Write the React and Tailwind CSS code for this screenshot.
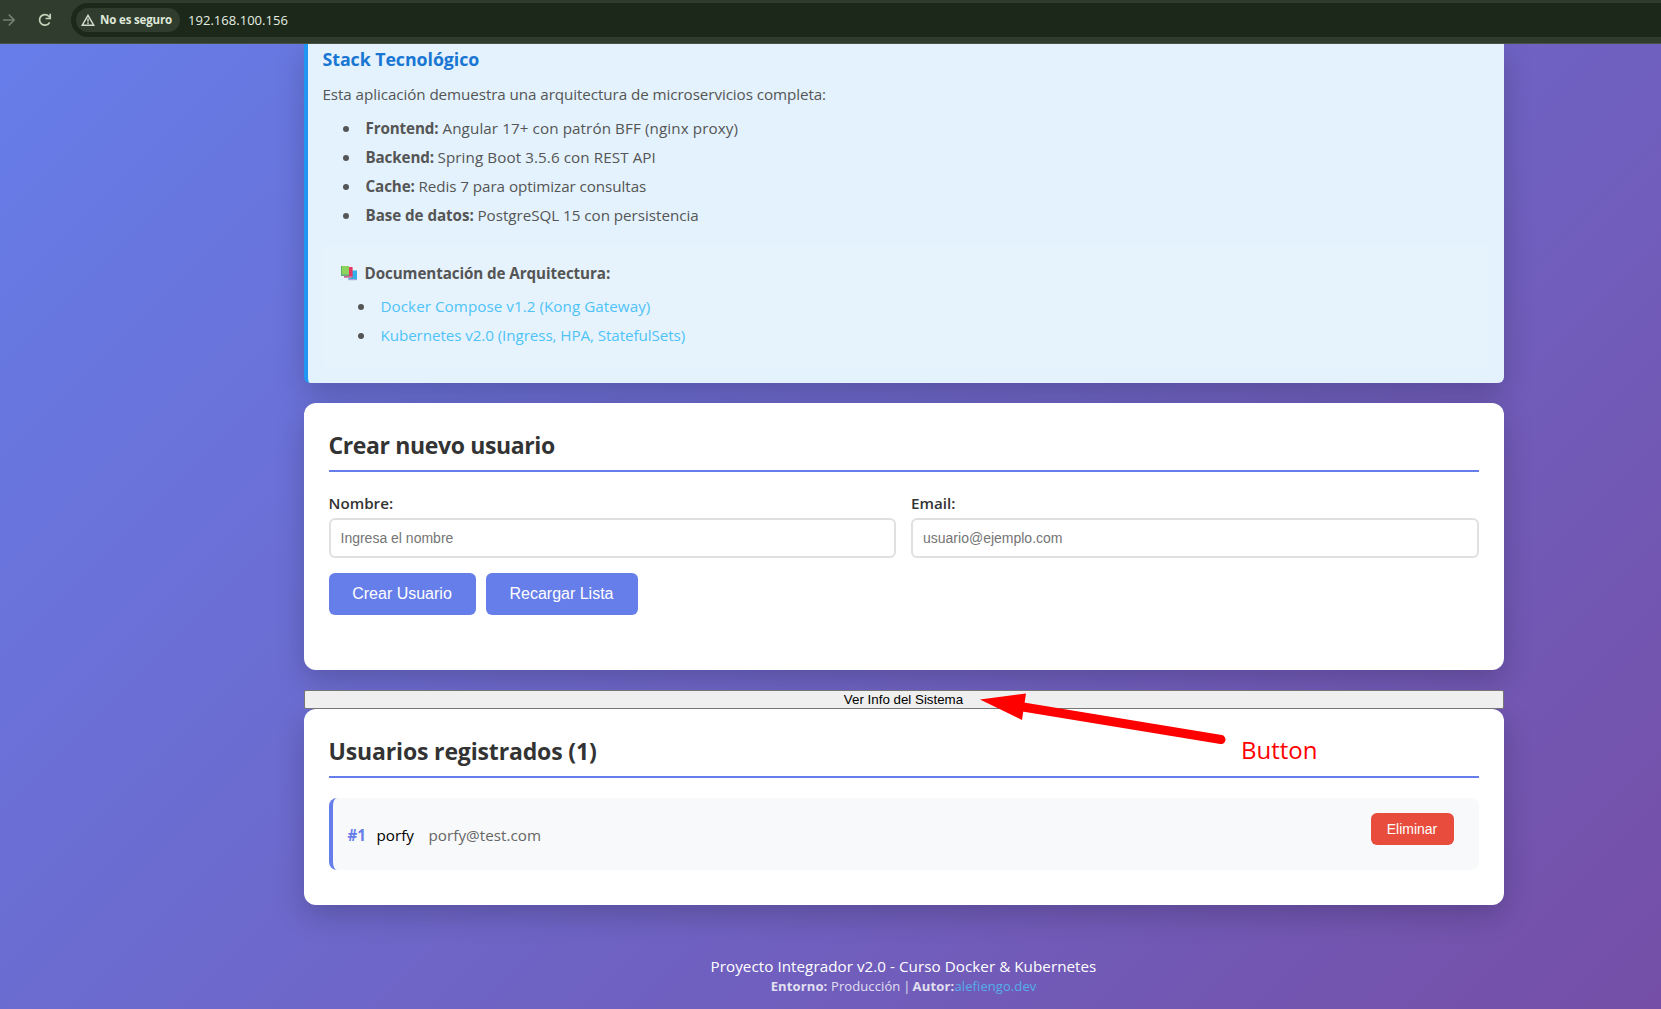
import React from "react";

function BrowserBar() {
  return (
    <header className="flex h-[44px] items-start border-b border-[#465143] bg-[#303d2e] pt-[3px]">
      <div className="flex h-[34px] w-[71px] shrink-0 items-center">
        <svg width="16" height="14" viewBox="0 0 16 14" fill="none" stroke="#74806f" strokeWidth="1.6">
          <path d="M3 7h11M8.8 1.6 14.2 7l-5.4 5.4" />
        </svg>
        <svg className="ml-[22px]" width="14" height="14" viewBox="0 0 14 14" fill="none" stroke="#c3d3bc" strokeWidth="1.7">
          <path d="M11.6 9.3A5.3 5.3 0 1 1 10.8 3.3L12 4.6" />
          <path d="M12.2 .8v4.7H7.6" />
        </svg>
      </div>
      <div className="flex h-[34px] flex-1 items-center rounded-l-[17px] bg-[#1c291a] pl-[5px]">
        <div className="flex h-6 w-[104px] items-center rounded-full bg-[#303d2e] pl-[5px] text-[11.5px] font-bold tracking-[-0.15px] text-[#dfe8da]">
          <svg className="mr-[5px]" width="14" height="12" viewBox="0 0 14 12" fill="none" stroke="#d3ddce" strokeWidth="1.4">
            <path d="M7 1.3 12.8 11.3H1.2Z" />
            <path d="M7 4.4v3.4M7 8.6v1.4" />
          </svg>
          <span className="whitespace-nowrap">No es seguro</span>
        </div>
        <span className="ml-2 pt-px text-[13px] tracking-[0.03px] text-[#e6ede2]">192.168.100.156</span>
      </div>
    </header>
  );
}

const stack = [
  { label: "Frontend:", text: "Angular 17+ con patrón BFF (nginx proxy)", l: "w-[77px] tracking-[-0.13px]", t: "tracking-[0.1px]" },
  { label: "Backend:", text: "Spring Boot 3.5.6 con REST API", l: "w-[72px] tracking-[-0.13px]", t: "tracking-[0.09px]" },
  { label: "Cache:", text: "Redis 7 para optimizar consultas", l: "w-[53px] tracking-[-0.1px]", t: "tracking-[-0.06px]" },
  { label: "Base de datos:", text: "PostgreSQL 15 con persistencia", l: "w-[112px] tracking-[-0.06px]", t: "tracking-[-0.03px]" },
];

const docs = [
  { text: "Docker Compose v1.2 (Kong Gateway)", t: "tracking-[0.055px]" },
  { text: "Kubernetes v2.0 (Ingress, HPA, StatefulSets)", t: "tracking-[-0.08px]" },
];

function Bullet() {
  return <span className="mr-[17px] size-[6px] shrink-0 rounded-full bg-[#555]" />;
}

function Books() {
  return (
    <svg className="mr-[8px] shrink-0" width="16" height="15" viewBox="0 0 16 15">
      <path d="M10 4.5h6V14H7.5v-2H10z" fill="#35aeea" />
      <path d="M7.5 13h8.2v1.2H7.5z" fill="#a9a6d8" />
      <path d="M7 1h4.6v10.4H3V9.5h4z" fill="#e23a62" />
      <path d="M3 10.4h8v1.4H3z" fill="#c486ad" />
      <path d="M0 0h8v8.8H0z" fill="#8fd35f" />
      <path d="M0 8.4h8v1.6H0z" fill="#63aa78" />
      <path d="M0 0h1v10H0z" fill="#58b55b" />
    </svg>
  );
}

function StackCard() {
  return (
    <section className="h-[339px] rounded-b-md border-l-4 border-[#2196f3] bg-[#e3f2fd] pl-[15px] pr-[15px] text-[15.2px] text-[#555] shadow-[0_10px_30px_rgba(0,0,0,0.2)]">
      <h3 className="pt-[3px] text-[17.8px] font-bold leading-[24px] tracking-[-0.06px] text-[#1976d2]">Stack Tecnológico</h3>
      <p className="mt-[9px] leading-[28px] tracking-[-0.075px]">
        Esta aplicación demuestra una arquitectura de microservicios completa:
      </p>
      <ul className="mt-[6px] pl-5">
        {stack.map((s) => (
          <li key={s.label} className="flex h-[29px] items-center whitespace-nowrap">
            <Bullet />
            <strong className={"shrink-0 " + s.l}>{s.label}</strong>
            <span className={s.t}>{s.text}</span>
          </li>
        ))}
      </ul>
      <div className="mt-[15px] h-[123px] rounded-[5px] bg-white/10 pl-[18px] pt-[14px]">
        <div className="flex h-[29px] items-center">
          <Books />
          <strong className="tracking-[-0.09px]">Documentación de Arquitectura:</strong>
        </div>
        <ul className="mt-[4px] pl-[17px]">
          {docs.map((d) => (
            <li key={d.text} className="flex h-[29px] items-center whitespace-nowrap">
              <Bullet />
              <a className={"text-[#4fc3f7] " + d.t}>{d.text}</a>
            </li>
          ))}
        </ul>
      </div>
    </section>
  );
}

function Field({ label, placeholder }) {
  return (
    <div className="flex-1">
      <label className="block h-[26px] text-[15.2px] font-semibold leading-[23px] text-[#333]">{label}</label>
      <input
        placeholder={placeholder}
        className="block h-10 w-full rounded-md border-2 border-[#e0e0e0] bg-white px-[10px] font-['Liberation_Sans',sans-serif] text-[14px] placeholder:text-[#757575]"
      />
    </div>
  );
}

function CreateCard() {
  return (
    <section className="mt-5 h-[267px] rounded-xl bg-white p-[25px] shadow-[0_10px_30px_rgba(0,0,0,0.2)]">
      <h2 className="mb-5 h-11 border-b-2 border-[#667eea] text-[23px] font-bold leading-[35px] tracking-[-0.37px] text-[#333]">Crear nuevo usuario</h2>
      <div className="flex gap-[15px]">
        <Field label="Nombre:" placeholder="Ingresa el nombre" />
        <Field label="Email:" placeholder="usuario@ejemplo.com" />
      </div>
      <div className="mt-[15px] flex gap-[10px] font-['Liberation_Sans',sans-serif] text-base text-white">
        <button className="h-[42px] w-[147px] rounded-md bg-[#667eea]">Crear Usuario</button>
        <button className="h-[42px] w-[152px] rounded-md bg-[#667eea]">Recargar Lista</button>
      </div>
    </section>
  );
}

function UsersCard() {
  return (
    <section className="h-[196px] rounded-xl bg-white p-[25px] shadow-[0_10px_30px_rgba(0,0,0,0.2)]">
      <h2 className="mb-5 h-11 border-b-2 border-[#667eea] text-[23px] font-bold leading-[35px] tracking-[-0.15px] text-[#333]">Usuarios registrados (1)</h2>
      <div className="flex h-[72px] items-start rounded-lg border-l-4 border-[#667eea] bg-[#f8f9fa] pl-[15px] pr-[25px] pt-[15px] text-[15.2px]">
        <div className="flex pt-[10px] leading-[24px]">
          <span className="w-[29px] font-bold text-[#667eea]">#1</span>
          <span className="w-[52px] text-black">porfy</span>
          <span className="tracking-[0.04px] text-[#666]">porfy@test.com</span>
        </div>
        <button className="ml-auto h-8 w-[83px] rounded-md bg-[#e74c3c] font-['Liberation_Sans',sans-serif] text-[14px] text-white">Eliminar</button>
      </div>
    </section>
  );
}

function Annotation() {
  return (
    <div className="pointer-events-none absolute left-[676.5px] top-[2px] h-[90px] w-[360px] text-[#f00]">
      <svg width="260" height="60" viewBox="0 0 260 60" fill="currentColor">
        <path d="M0 7.5 46 1.5 42 28Z" />
        <path d="M40 14.5 241 47.5" stroke="currentColor" strokeWidth="9" strokeLinecap="round" />
      </svg>
      <span className="absolute left-[261px] top-[40px] text-[24px] font-normal leading-[36px]">Button</span>
    </div>
  );
}

export default function App() {
  return (
    <div className="flex h-[1009px] w-full flex-col overflow-hidden font-['Open_Sans',sans-serif]">
      <BrowserBar />
      <div className="flex-1 overflow-hidden bg-[linear-gradient(135deg,#667eea_0%,#764ba2_100%)] bg-[length:1905px_965px] bg-[position:-48px_0px]">
        <main className="ml-[303.5px] w-[1200px]">
          <StackCard />
          <CreateCard />
          <div className="relative mt-5">
            <button className="relative block h-[19px] w-full rounded-[2px] border border-[#767676] bg-[#efefef] font-['Liberation_Sans',sans-serif] text-[13.333px] leading-[16px] text-black">
              Ver Info del Sistema
            </button>
            <UsersCard />
            <Annotation />
          </div>
          <footer className="pt-[49px] text-center text-white">
            <p className="text-[15.2px] leading-[24px] tracking-[0.05px]">Proyecto Integrador v2.0 - Curso Docker &amp; Kubernetes</p>
            <p className="flex justify-center whitespace-pre text-[13px] leading-[16px] opacity-80">
              <strong className="tracking-[0.14px]">Entorno: </strong>
              <span className="tracking-[0.1px]">Producción</span>
              <span className="tracking-[-0.6px]"> | </span>
              <strong className="tracking-[0.2px]">Autor:</strong>
              <a className="tracking-[0.08px] text-[#4fc3f7]">alefiengo.dev</a>
            </p>
          </footer>
        </main>
      </div>
    </div>
  );
}
